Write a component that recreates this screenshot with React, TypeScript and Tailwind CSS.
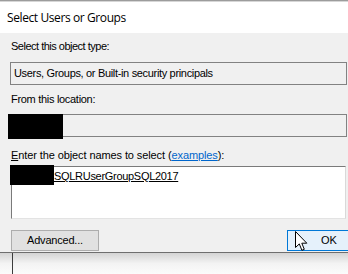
import React from 'react';

const body = "font-['Liberation_Sans',Arial,sans-serif] text-[11px] text-black";

function Cursor() {
  return (
    <svg width="13" height="21" viewBox="0 0 13 21" className="absolute left-[295px] top-[231px]">
      <path
        d="M0.5 0.5 L0.5 16.5 L4.3 12.9 L6.9 19.3 L9.3 18.3 L6.8 12.2 L11.8 12.2 Z"
        fill="#ffffff"
        stroke="#000000"
        strokeWidth="1"
        strokeLinejoin="miter"
      />
    </svg>
  );
}

export default function App() {
  return (
    <div className="relative w-[348px] h-[274px] overflow-hidden bg-white flex flex-col">
      {/* window top edge */}
      <div className="h-[2px] bg-[#9c9c9c] border-b border-[#d6d6d6]" />

      {/* title bar */}
      <div className="h-[31px] bg-white flex items-center pl-[7px]">
        <span className="font-['Open_Sans',sans-serif] text-[12px] text-black tracking-[-0.4px]">
          Select Users or Groups
        </span>
      </div>

      {/* dialog body */}
      <div className={`h-[219px] bg-[#f0f0f0] flex flex-col pl-[10px] pr-[1px] ${body}`}>
        <div className="h-[13px] mt-[7px] pl-[1px] leading-[13px] tracking-[-0.5px]">Select this object type:</div>
        <div className="mt-[9px] h-[23px] border border-[#828282] flex items-center pl-[3px] tracking-[-0.33px]">
          Users, Groups, or Built-in security principals
        </div>

        <div className="h-[13px] mt-[8px] pl-[1px] leading-[13px] tracking-[-0.3px]">From this location:</div>
        <div className="relative mt-[8px] h-[23px] border border-[#828282]">
          <div className="absolute left-[-3px] top-[-1px] w-[55px] h-[25px] bg-black" />
        </div>

        <div className="h-[13px] mt-[12px] pl-[1px] leading-[13px] tracking-[-0.1px]">
          <span className="underline underline-offset-[1px]">E</span>nter the object names to select (
          <span className="text-[#0066cc] underline underline-offset-[1px]">examples</span>):
        </div>
        <div className="relative mt-[4px] ml-[1px] mr-[1px] h-[53px] bg-white border border-[#7a7a7a] border-r-[#d9d9d9] border-b-[#e3e3e3]">
          <div className="absolute left-[-2px] top-[-2px] w-[44px] h-[20px] bg-black" />
          <div className="pl-[42px] pt-[3px] leading-[13px] tracking-[-0.3px]">
            <span className="underline underline-offset-[1px]">SQLRUserGroupSQL2017</span>
          </div>
        </div>

        <div className="mt-[11px] flex justify-between items-start">
          <div className="ml-[1px] w-[88px] h-[21px] bg-[#e1e1e1] border border-[#adadad] flex items-center justify-center tracking-[-0.2px]">
            Advanced...
          </div>
          <div className="w-[61px] h-[21px] bg-[#e5f1fb] border border-[#0078d7] border-r-0 flex items-center pl-[33px] mr-[-1px]">
            OK
          </div>
        </div>
      </div>

      {/* bottom edge and what lies below the dialog */}
      <div className="h-[1px] bg-[#6e6e6e]" />
      <div className="flex-1 bg-gradient-to-b from-[#d4d4d4] via-[#f3f3f3] to-[#fbfbfb] pl-[12px]">
        <div className="w-[1px] h-full bg-[#3c3c3c]" />
      </div>

      <Cursor />
    </div>
  );
}
